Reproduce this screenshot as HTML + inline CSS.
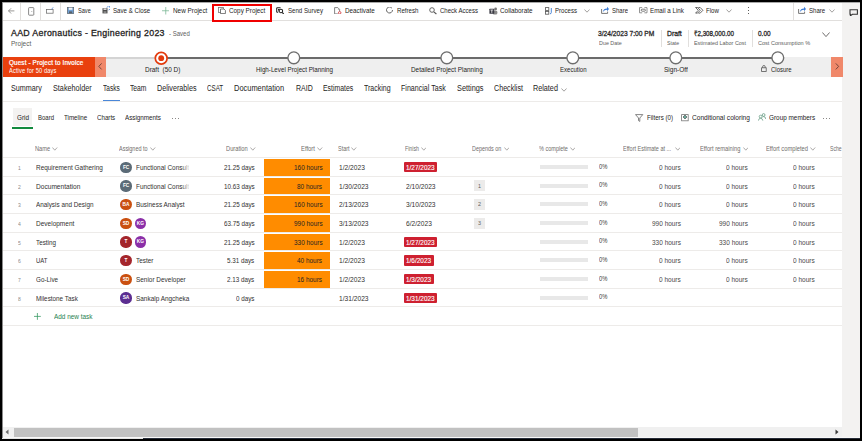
<!DOCTYPE html><html><head><meta charset="utf-8"><style>
*{margin:0;padding:0}
html,body{width:862px;height:441px;overflow:hidden;background:#fff}
body{position:relative;font-family:"Liberation Sans",sans-serif}
.t{position:absolute;white-space:pre;transform-origin:0 0}
.r{position:absolute}
.av{width:11.2px;height:11.2px;border-radius:50%;color:#fff;font-size:4.8px;font-weight:bold;line-height:11.2px;text-align:center;letter-spacing:-0.1px}
</style></head><body>
<div class="r" style="left:0px;top:0px;width:862px;height:441px;background:#ffffff;"></div>
<div class="r" style="left:842px;top:0px;width:20px;height:441px;background:#f3f2f1;"></div>
<div class="r" style="left:2px;top:20px;width:840px;height:1px;background:#e1dfdd;"></div>
<div class="r" style="left:20px;top:2px;width:1px;height:18px;background:#e1dfdd;"></div>
<div class="r" style="left:40px;top:2px;width:1px;height:18px;background:#e1dfdd;"></div>
<div class="r" style="left:60px;top:2px;width:1px;height:18px;background:#e1dfdd;"></div>
<div class="r" style="left:793px;top:2px;width:1px;height:18px;background:#e1dfdd;"></div>
<div class="t" style="left:77.50px;top:7.11px;font-size:7.49px;line-height:7.49px;color:#252423;transform:scaleX(0.750);">Save</div>
<div class="t" style="left:113.00px;top:7.11px;font-size:7.49px;line-height:7.49px;color:#252423;transform:scaleX(0.820);">Save &amp; Close</div>
<div class="t" style="left:172.60px;top:7.11px;font-size:7.49px;line-height:7.49px;color:#252423;transform:scaleX(0.852);">New Project</div>
<div class="t" style="left:229.00px;top:7.11px;font-size:7.49px;line-height:7.49px;color:#252423;transform:scaleX(0.847);">Copy Project</div>
<div class="t" style="left:287.50px;top:7.11px;font-size:7.49px;line-height:7.49px;color:#252423;transform:scaleX(0.816);">Send Survey</div>
<div class="t" style="left:345.00px;top:7.11px;font-size:7.49px;line-height:7.49px;color:#252423;transform:scaleX(0.842);">Deactivate</div>
<div class="t" style="left:396.50px;top:7.11px;font-size:7.49px;line-height:7.49px;color:#252423;transform:scaleX(0.820);">Refresh</div>
<div class="t" style="left:440.00px;top:7.11px;font-size:7.49px;line-height:7.49px;color:#252423;transform:scaleX(0.808);">Check Access</div>
<div class="t" style="left:500.40px;top:7.11px;font-size:7.49px;line-height:7.49px;color:#252423;transform:scaleX(0.851);">Collaborate</div>
<div class="t" style="left:555.00px;top:7.11px;font-size:7.49px;line-height:7.49px;color:#252423;transform:scaleX(0.813);">Process</div>
<div class="t" style="left:612.00px;top:7.11px;font-size:7.49px;line-height:7.49px;color:#252423;transform:scaleX(0.800);">Share</div>
<div class="t" style="left:650.30px;top:7.11px;font-size:7.49px;line-height:7.49px;color:#252423;transform:scaleX(0.833);">Email a Link</div>
<div class="t" style="left:706.40px;top:7.11px;font-size:7.49px;line-height:7.49px;color:#252423;transform:scaleX(0.816);">Flow</div>
<div class="t" style="left:808.60px;top:7.11px;font-size:7.49px;line-height:7.49px;color:#252423;transform:scaleX(0.810);">Share</div>
<div class="r" style="left:212.2px;top:4.2px;width:59.8px;height:17.6px;background:transparent;box-sizing:border-box;border:2.1px solid #f00000;"></div>
<div class="t" style="left:11.20px;top:29.04px;font-size:8.7px;line-height:8.7px;color:#252423;-webkit-text-stroke:0.3px #252423;letter-spacing:0.3px;transform:scaleX(1.014);">AAD Aeronautics - Engineering 2023</div>
<div class="t" style="left:169.00px;top:30.94px;font-size:6.45px;line-height:6.45px;color:#605e5c;transform:scaleX(0.936);">- Saved</div>
<div class="t" style="left:11.20px;top:40.12px;font-size:7.07px;line-height:7.07px;color:#605e5c;transform:scaleX(0.923);">Project</div>
<div class="t" style="left:598.00px;top:30.24px;font-size:7.28px;line-height:7.28px;color:#252423;-webkit-text-stroke:0.28px #252423;transform:scaleX(0.917);">3/24/2023 7:00 PM</div>
<div class="t" style="left:598.50px;top:39.70px;font-size:6.03px;line-height:6.03px;color:#605e5c;transform:scaleX(0.895);">Due Date</div>
<div class="r" style="left:660.5px;top:30px;width:1px;height:17px;background:#e1dfdd;"></div>
<div class="t" style="left:666.60px;top:30.24px;font-size:7.28px;line-height:7.28px;color:#252423;-webkit-text-stroke:0.28px #252423;transform:scaleX(0.938);">Draft</div>
<div class="t" style="left:666.80px;top:39.70px;font-size:6.03px;line-height:6.03px;color:#605e5c;transform:scaleX(0.866);">State</div>
<div class="r" style="left:688px;top:30px;width:1px;height:17px;background:#e1dfdd;"></div>
<div class="t" style="left:693.80px;top:30.24px;font-size:7.28px;line-height:7.28px;color:#252423;-webkit-text-stroke:0.28px #252423;transform:scaleX(0.859);">₹2,308,000.00</div>
<div class="t" style="left:694.00px;top:39.70px;font-size:6.03px;line-height:6.03px;color:#605e5c;transform:scaleX(0.900);">Estimated Labor Cost</div>
<div class="r" style="left:751.5px;top:30px;width:1px;height:17px;background:#e1dfdd;"></div>
<div class="t" style="left:757.60px;top:30.24px;font-size:7.28px;line-height:7.28px;color:#252423;-webkit-text-stroke:0.28px #252423;transform:scaleX(0.889);">0.00</div>
<div class="t" style="left:757.80px;top:39.70px;font-size:6.03px;line-height:6.03px;color:#605e5c;transform:scaleX(0.922);">Cost Consumption %</div>
<div class="r" style="left:2px;top:57px;width:93px;height:19.5px;background:#e9400e;"></div>
<div class="r" style="left:95px;top:57px;width:11px;height:19.5px;background:#f0886a;"></div>
<div class="r" style="left:106px;top:57px;width:725px;height:19.5px;background:#efefef;"></div>
<div class="r" style="left:830.5px;top:57px;width:12px;height:19.5px;background:#f0886a;"></div>
<div class="t" style="left:9.20px;top:60.28px;font-size:6.4px;line-height:6.4px;color:#ffffff;-webkit-text-stroke:0.22px #ffffff;letter-spacing:0.15px;transform:scaleX(0.985);">Quest - Project to Invoice</div>
<div class="t" style="left:9.20px;top:67.77px;font-size:6.3px;line-height:6.3px;color:#ffffff;letter-spacing:0.12px;transform:scaleX(0.911);">Active for 50 days</div>
<div class="r" style="left:106px;top:57px;width:55px;height:1.5px;background:#d4d4d4;"></div>
<div class="r" style="left:161px;top:57.2px;width:617px;height:1.6px;background:#6b6b6b;"></div>
<div class="t" style="left:145.30px;top:66.02px;font-size:7.07px;line-height:7.07px;color:#252423;transform:scaleX(0.910);">Draft  (50 D)</div>
<div class="t" style="left:255.80px;top:66.02px;font-size:7.07px;line-height:7.07px;color:#252423;transform:scaleX(0.883);">High-Level Project Planning</div>
<div class="t" style="left:410.90px;top:66.02px;font-size:7.07px;line-height:7.07px;color:#252423;transform:scaleX(0.904);">Detailed Project Planning</div>
<div class="t" style="left:560.40px;top:66.02px;font-size:7.07px;line-height:7.07px;color:#252423;transform:scaleX(0.857);">Execution</div>
<div class="t" style="left:663.80px;top:66.02px;font-size:7.07px;line-height:7.07px;color:#252423;transform:scaleX(0.922);">Sign-Off</div>
<div class="t" style="left:771.40px;top:66.02px;font-size:7.07px;line-height:7.07px;color:#252423;transform:scaleX(0.846);">Closure</div>
<div class="r" style="left:2px;top:101px;width:840px;height:1px;background:#edebe9;"></div>
<div class="t" style="left:11.40px;top:85.30px;font-size:8.27px;line-height:8.27px;color:#252423;transform:scaleX(0.870);">Summary</div>
<div class="t" style="left:53.20px;top:85.30px;font-size:8.27px;line-height:8.27px;color:#252423;transform:scaleX(0.877);">Stakeholder</div>
<div class="t" style="left:103.00px;top:85.30px;font-size:8.27px;line-height:8.27px;color:#252423;transform:scaleX(0.795);">Tasks</div>
<div class="t" style="left:130.10px;top:85.30px;font-size:8.27px;line-height:8.27px;color:#252423;transform:scaleX(0.816);">Team</div>
<div class="t" style="left:156.90px;top:85.30px;font-size:8.27px;line-height:8.27px;color:#252423;transform:scaleX(0.868);">Deliverables</div>
<div class="t" style="left:207.30px;top:85.30px;font-size:8.27px;line-height:8.27px;color:#252423;transform:scaleX(0.755);">CSAT</div>
<div class="t" style="left:234.20px;top:85.30px;font-size:8.27px;line-height:8.27px;color:#252423;transform:scaleX(0.902);">Documentation</div>
<div class="t" style="left:296.00px;top:85.30px;font-size:8.27px;line-height:8.27px;color:#252423;transform:scaleX(0.850);">RAID</div>
<div class="t" style="left:322.80px;top:85.30px;font-size:8.27px;line-height:8.27px;color:#252423;transform:scaleX(0.835);">Estimates</div>
<div class="t" style="left:363.80px;top:85.30px;font-size:8.27px;line-height:8.27px;color:#252423;transform:scaleX(0.847);">Tracking</div>
<div class="t" style="left:401.30px;top:85.30px;font-size:8.27px;line-height:8.27px;color:#252423;transform:scaleX(0.857);">Financial Task</div>
<div class="t" style="left:456.80px;top:85.30px;font-size:8.27px;line-height:8.27px;color:#252423;transform:scaleX(0.887);">Settings</div>
<div class="t" style="left:493.70px;top:85.30px;font-size:8.27px;line-height:8.27px;color:#252423;transform:scaleX(0.864);">Checklist</div>
<div class="t" style="left:533.30px;top:85.30px;font-size:8.27px;line-height:8.27px;color:#252423;transform:scaleX(0.874);">Related</div>
<div class="r" style="left:102.7px;top:99.6px;width:17.3px;height:1.8px;background:#4a87d8;"></div>
<div class="r" style="left:12.6px;top:108px;width:19.8px;height:17.6px;background:#f3f2f1;"></div>
<div class="r" style="left:12.4px;top:126.9px;width:20.2px;height:1.8px;background:#128a3e;"></div>
<div class="t" style="left:16.80px;top:114.42px;font-size:7.07px;line-height:7.07px;color:#252423;transform:scaleX(0.898);">Grid</div>
<div class="t" style="left:38.00px;top:114.42px;font-size:7.07px;line-height:7.07px;color:#252423;transform:scaleX(0.848);">Board</div>
<div class="t" style="left:64.10px;top:114.42px;font-size:7.07px;line-height:7.07px;color:#252423;transform:scaleX(0.877);">Timeline</div>
<div class="t" style="left:96.90px;top:114.42px;font-size:7.07px;line-height:7.07px;color:#252423;transform:scaleX(0.874);">Charts</div>
<div class="t" style="left:125.00px;top:114.42px;font-size:7.07px;line-height:7.07px;color:#252423;transform:scaleX(0.889);">Assignments</div>
<div class="t" style="left:647.00px;top:114.32px;font-size:7.07px;line-height:7.07px;color:#252423;transform:scaleX(0.871);">Filters (0)</div>
<div class="t" style="left:692.00px;top:114.32px;font-size:7.07px;line-height:7.07px;color:#252423;transform:scaleX(0.934);">Conditional coloring</div>
<div class="t" style="left:769.20px;top:114.32px;font-size:7.07px;line-height:7.07px;color:#252423;transform:scaleX(0.904);">Group members</div>
<div class="t" style="left:34.80px;top:146.34px;font-size:6.45px;line-height:6.45px;color:#6f6d6b;transform:scaleX(0.878);">Name</div>
<div class="t" style="left:119.20px;top:146.34px;font-size:6.45px;line-height:6.45px;color:#6f6d6b;transform:scaleX(0.849);">Assigned to</div>
<div class="t" style="left:225.80px;top:146.34px;font-size:6.45px;line-height:6.45px;color:#6f6d6b;transform:scaleX(0.894);">Duration</div>
<div class="t" style="left:301.30px;top:146.34px;font-size:6.45px;line-height:6.45px;color:#6f6d6b;transform:scaleX(0.915);">Effort</div>
<div class="t" style="left:337.50px;top:146.34px;font-size:6.45px;line-height:6.45px;color:#6f6d6b;transform:scaleX(0.852);">Start</div>
<div class="t" style="left:404.70px;top:146.34px;font-size:6.45px;line-height:6.45px;color:#6f6d6b;transform:scaleX(0.814);">Finish</div>
<div class="t" style="left:471.80px;top:146.34px;font-size:6.45px;line-height:6.45px;color:#6f6d6b;transform:scaleX(0.842);">Depends on</div>
<div class="t" style="left:539.40px;top:146.34px;font-size:6.45px;line-height:6.45px;color:#6f6d6b;transform:scaleX(0.858);">% complete</div>
<div class="t" style="left:623.00px;top:146.34px;font-size:6.45px;line-height:6.45px;color:#6f6d6b;transform:scaleX(0.853);">Effort Estimate at ...</div>
<div class="t" style="left:700.40px;top:146.34px;font-size:6.45px;line-height:6.45px;color:#6f6d6b;transform:scaleX(0.890);">Effort remaining</div>
<div class="t" style="left:765.80px;top:146.34px;font-size:6.45px;line-height:6.45px;color:#6f6d6b;transform:scaleX(0.897);">Effort completed</div>
<div class="t" style="left:830.30px;top:146.34px;font-size:6.45px;line-height:6.45px;color:#6f6d6b;transform:scaleX(0.789);">Sche</div>
<div class="r" style="left:2px;top:157px;width:840px;height:1px;background:#edebe9;"></div>
<div class="r" style="left:2px;top:176px;width:840px;height:1px;background:#edebe9;"></div>
<div class="r" style="left:2px;top:194px;width:840px;height:1px;background:#edebe9;"></div>
<div class="r" style="left:2px;top:213px;width:840px;height:1px;background:#edebe9;"></div>
<div class="r" style="left:2px;top:232px;width:840px;height:1px;background:#edebe9;"></div>
<div class="r" style="left:2px;top:250px;width:840px;height:1px;background:#edebe9;"></div>
<div class="r" style="left:2px;top:269px;width:840px;height:1px;background:#edebe9;"></div>
<div class="r" style="left:2px;top:288px;width:840px;height:1px;background:#edebe9;"></div>
<div class="r" style="left:2px;top:306px;width:840px;height:1px;background:#edebe9;"></div>
<div class="r" style="left:2px;top:324.5px;width:840px;height:1px;background:#edebe9;"></div>
<div class="t" style="left:18.41px;top:164.70px;font-size:6.14px;line-height:6.14px;color:#8a8886;transform:scaleX(0.817);">1</div>
<div class="t" style="left:36.20px;top:163.94px;font-size:7.28px;line-height:7.28px;color:#323130;transform:scaleX(0.885);">Requirement Gathering</div>
<div class="r av" style="left:120.40px;top:161.60px;background:#5b6b77;">FC</div>
<div class="t" style="left:136.00px;top:163.94px;font-size:7.28px;line-height:7.28px;color:#323130;transform:scaleX(0.885);">Functional Consultant</div>
<div class="r" style="left:181.5px;top:161.2px;width:7px;height:12px;background:linear-gradient(to right, rgba(255,255,255,0), rgba(255,255,255,0.85));"></div>
<div class="r" style="left:188.5px;top:161.2px;width:30px;height:12px;background:#ffffff;"></div>
<div class="t" style="left:223.98px;top:163.94px;font-size:7.28px;line-height:7.28px;color:#323130;transform:scaleX(0.865);">21.25 days</div>
<div class="r" style="left:263.7px;top:158.7px;width:65.9px;height:17.2px;background:#ff8c00;"></div>
<div class="t" style="left:293.56px;top:163.94px;font-size:7.28px;line-height:7.28px;color:#252423;transform:scaleX(0.885);">160 hours</div>
<div class="t" style="left:339.00px;top:163.94px;font-size:7.28px;line-height:7.28px;color:#323130;transform:scaleX(0.913);">1/2/2023</div>
<div class="r" style="left:403.7px;top:161.7px;width:33.550453125000004px;height:10.6px;background:#ce2030;border-radius:1px;"></div>
<div class="t" style="left:406.00px;top:163.84px;font-size:7.28px;line-height:7.28px;color:#ffffff;-webkit-text-stroke:0.12px #ffffff;transform:scaleX(0.885);">1/27/2023</div>
<div class="r" style="left:539.9px;top:164.89999999999998px;width:48.0px;height:4.2px;background:#e8e8e8;"></div>
<div class="t" style="left:599.00px;top:163.52px;font-size:7.18px;line-height:7.18px;color:#3b3a39;transform:scaleX(0.809);">0%</div>
<div class="t" style="left:658.92px;top:165.18px;font-size:6.76px;line-height:6.76px;color:#4a4948;transform:scaleX(0.962);">0 hours</div>
<div class="t" style="left:725.92px;top:165.18px;font-size:6.76px;line-height:6.76px;color:#4a4948;transform:scaleX(0.962);">0 hours</div>
<div class="t" style="left:792.92px;top:165.18px;font-size:6.76px;line-height:6.76px;color:#4a4948;transform:scaleX(0.962);">0 hours</div>
<div class="t" style="left:18.41px;top:183.50px;font-size:6.14px;line-height:6.14px;color:#8a8886;transform:scaleX(0.817);">2</div>
<div class="t" style="left:36.20px;top:182.74px;font-size:7.28px;line-height:7.28px;color:#323130;transform:scaleX(0.907);">Documentation</div>
<div class="r av" style="left:120.40px;top:180.40px;background:#5b6b77;">FC</div>
<div class="t" style="left:136.00px;top:182.74px;font-size:7.28px;line-height:7.28px;color:#323130;transform:scaleX(0.885);">Functional Consultant</div>
<div class="r" style="left:181.5px;top:180.0px;width:7px;height:12px;background:linear-gradient(to right, rgba(255,255,255,0), rgba(255,255,255,0.85));"></div>
<div class="r" style="left:188.5px;top:180.0px;width:30px;height:12px;background:#ffffff;"></div>
<div class="t" style="left:223.98px;top:182.74px;font-size:7.28px;line-height:7.28px;color:#323130;transform:scaleX(0.865);">10.63 days</div>
<div class="r" style="left:263.7px;top:177.7px;width:65.9px;height:16.2px;background:#ff8c00;"></div>
<div class="t" style="left:297.14px;top:182.74px;font-size:7.28px;line-height:7.28px;color:#252423;transform:scaleX(0.885);">80 hours</div>
<div class="t" style="left:339.00px;top:182.74px;font-size:7.28px;line-height:7.28px;color:#323130;transform:scaleX(0.913);">1/30/2023</div>
<div class="t" style="left:406.00px;top:182.74px;font-size:7.28px;line-height:7.28px;color:#323130;transform:scaleX(0.913);">2/10/2023</div>
<div class="r" style="left:473.9px;top:180.4px;width:11.0px;height:11.0px;background:#ecebea;"></div>
<div class="t" style="left:477.90px;top:183.94px;font-size:5.62px;line-height:5.62px;color:#605e5c;transform:scaleX(0.961);">1</div>
<div class="r" style="left:539.9px;top:183.7px;width:48.0px;height:4.2px;background:#e8e8e8;"></div>
<div class="t" style="left:599.00px;top:182.32px;font-size:7.18px;line-height:7.18px;color:#3b3a39;transform:scaleX(0.809);">0%</div>
<div class="t" style="left:658.92px;top:183.98px;font-size:6.76px;line-height:6.76px;color:#4a4948;transform:scaleX(0.962);">0 hours</div>
<div class="t" style="left:725.92px;top:183.98px;font-size:6.76px;line-height:6.76px;color:#4a4948;transform:scaleX(0.962);">0 hours</div>
<div class="t" style="left:792.92px;top:183.98px;font-size:6.76px;line-height:6.76px;color:#4a4948;transform:scaleX(0.962);">0 hours</div>
<div class="t" style="left:18.41px;top:202.00px;font-size:6.14px;line-height:6.14px;color:#8a8886;transform:scaleX(0.817);">3</div>
<div class="t" style="left:36.20px;top:201.24px;font-size:7.28px;line-height:7.28px;color:#323130;transform:scaleX(0.873);">Analysis and Design</div>
<div class="r av" style="left:120.40px;top:198.90px;background:#ca5010;">BA</div>
<div class="t" style="left:136.00px;top:201.24px;font-size:7.28px;line-height:7.28px;color:#323130;transform:scaleX(0.885);">Business Analyst</div>
<div class="t" style="left:223.98px;top:201.24px;font-size:7.28px;line-height:7.28px;color:#323130;transform:scaleX(0.865);">21.25 days</div>
<div class="r" style="left:263.7px;top:195.7px;width:65.9px;height:17.2px;background:#ff8c00;"></div>
<div class="t" style="left:293.56px;top:201.24px;font-size:7.28px;line-height:7.28px;color:#252423;transform:scaleX(0.885);">160 hours</div>
<div class="t" style="left:339.00px;top:201.24px;font-size:7.28px;line-height:7.28px;color:#323130;transform:scaleX(0.913);">2/13/2023</div>
<div class="t" style="left:406.00px;top:201.24px;font-size:7.28px;line-height:7.28px;color:#323130;transform:scaleX(0.913);">3/10/2023</div>
<div class="r" style="left:473.9px;top:198.9px;width:11.0px;height:11.0px;background:#ecebea;"></div>
<div class="t" style="left:477.90px;top:202.44px;font-size:5.62px;line-height:5.62px;color:#605e5c;transform:scaleX(0.961);">2</div>
<div class="r" style="left:539.9px;top:202.2px;width:48.0px;height:4.2px;background:#e8e8e8;"></div>
<div class="t" style="left:599.00px;top:200.82px;font-size:7.18px;line-height:7.18px;color:#3b3a39;transform:scaleX(0.809);">0%</div>
<div class="t" style="left:658.92px;top:202.48px;font-size:6.76px;line-height:6.76px;color:#4a4948;transform:scaleX(0.962);">0 hours</div>
<div class="t" style="left:725.92px;top:202.48px;font-size:6.76px;line-height:6.76px;color:#4a4948;transform:scaleX(0.962);">0 hours</div>
<div class="t" style="left:792.92px;top:202.48px;font-size:6.76px;line-height:6.76px;color:#4a4948;transform:scaleX(0.962);">0 hours</div>
<div class="t" style="left:18.41px;top:220.70px;font-size:6.14px;line-height:6.14px;color:#8a8886;transform:scaleX(0.817);">4</div>
<div class="t" style="left:36.20px;top:219.94px;font-size:7.28px;line-height:7.28px;color:#323130;transform:scaleX(0.895);">Development</div>
<div class="r av" style="left:120.40px;top:217.60px;background:#ca5010;">SD</div>
<div class="r av" style="left:134.70px;top:217.60px;background:#8b2fa8;">KG</div>
<div class="t" style="left:223.98px;top:219.94px;font-size:7.28px;line-height:7.28px;color:#323130;transform:scaleX(0.865);">63.75 days</div>
<div class="r" style="left:263.7px;top:214.7px;width:65.9px;height:17.2px;background:#ff8c00;"></div>
<div class="t" style="left:293.56px;top:219.94px;font-size:7.28px;line-height:7.28px;color:#252423;transform:scaleX(0.885);">990 hours</div>
<div class="t" style="left:339.00px;top:219.94px;font-size:7.28px;line-height:7.28px;color:#323130;transform:scaleX(0.913);">3/13/2023</div>
<div class="t" style="left:406.00px;top:219.94px;font-size:7.28px;line-height:7.28px;color:#323130;transform:scaleX(0.913);">6/2/2023</div>
<div class="r" style="left:473.9px;top:217.6px;width:11.0px;height:11.0px;background:#ecebea;"></div>
<div class="t" style="left:477.90px;top:221.14px;font-size:5.62px;line-height:5.62px;color:#605e5c;transform:scaleX(0.961);">3</div>
<div class="r" style="left:539.9px;top:220.89999999999998px;width:48.0px;height:4.2px;background:#e8e8e8;"></div>
<div class="t" style="left:599.00px;top:219.52px;font-size:7.18px;line-height:7.18px;color:#3b3a39;transform:scaleX(0.809);">0%</div>
<div class="t" style="left:651.69px;top:221.18px;font-size:6.76px;line-height:6.76px;color:#4a4948;transform:scaleX(0.962);">990 hours</div>
<div class="t" style="left:718.69px;top:221.18px;font-size:6.76px;line-height:6.76px;color:#4a4948;transform:scaleX(0.962);">990 hours</div>
<div class="t" style="left:792.92px;top:221.18px;font-size:6.76px;line-height:6.76px;color:#4a4948;transform:scaleX(0.962);">0 hours</div>
<div class="t" style="left:18.41px;top:239.50px;font-size:6.14px;line-height:6.14px;color:#8a8886;transform:scaleX(0.817);">5</div>
<div class="t" style="left:36.20px;top:238.74px;font-size:7.28px;line-height:7.28px;color:#323130;transform:scaleX(0.867);">Testing</div>
<div class="r av" style="left:120.40px;top:236.40px;background:#a4262c;">T</div>
<div class="r av" style="left:134.70px;top:236.40px;background:#8b2fa8;">KG</div>
<div class="t" style="left:223.98px;top:238.74px;font-size:7.28px;line-height:7.28px;color:#323130;transform:scaleX(0.865);">21.25 days</div>
<div class="r" style="left:263.7px;top:233.7px;width:65.9px;height:16.2px;background:#ff8c00;"></div>
<div class="t" style="left:293.56px;top:238.74px;font-size:7.28px;line-height:7.28px;color:#252423;transform:scaleX(0.885);">330 hours</div>
<div class="t" style="left:339.00px;top:238.74px;font-size:7.28px;line-height:7.28px;color:#323130;transform:scaleX(0.913);">1/2/2023</div>
<div class="r" style="left:403.7px;top:236.5px;width:33.550453125000004px;height:10.6px;background:#ce2030;border-radius:1px;"></div>
<div class="t" style="left:406.00px;top:238.64px;font-size:7.28px;line-height:7.28px;color:#ffffff;-webkit-text-stroke:0.12px #ffffff;transform:scaleX(0.885);">1/27/2023</div>
<div class="r" style="left:539.9px;top:239.7px;width:48.0px;height:4.2px;background:#e8e8e8;"></div>
<div class="t" style="left:599.00px;top:238.32px;font-size:7.18px;line-height:7.18px;color:#3b3a39;transform:scaleX(0.809);">0%</div>
<div class="t" style="left:651.69px;top:239.98px;font-size:6.76px;line-height:6.76px;color:#4a4948;transform:scaleX(0.962);">330 hours</div>
<div class="t" style="left:718.69px;top:239.98px;font-size:6.76px;line-height:6.76px;color:#4a4948;transform:scaleX(0.962);">330 hours</div>
<div class="t" style="left:792.92px;top:239.98px;font-size:6.76px;line-height:6.76px;color:#4a4948;transform:scaleX(0.962);">0 hours</div>
<div class="t" style="left:18.41px;top:258.00px;font-size:6.14px;line-height:6.14px;color:#8a8886;transform:scaleX(0.817);">6</div>
<div class="t" style="left:36.20px;top:257.24px;font-size:7.28px;line-height:7.28px;color:#323130;transform:scaleX(0.813);">UAT</div>
<div class="r av" style="left:120.40px;top:254.90px;background:#a4262c;">T</div>
<div class="t" style="left:136.00px;top:257.24px;font-size:7.28px;line-height:7.28px;color:#323130;transform:scaleX(0.885);">Tester</div>
<div class="t" style="left:227.48px;top:257.24px;font-size:7.28px;line-height:7.28px;color:#323130;transform:scaleX(0.865);">5.31 days</div>
<div class="r" style="left:263.7px;top:251.7px;width:65.9px;height:17.2px;background:#ff8c00;"></div>
<div class="t" style="left:297.14px;top:257.24px;font-size:7.28px;line-height:7.28px;color:#252423;transform:scaleX(0.885);">40 hours</div>
<div class="t" style="left:339.00px;top:257.24px;font-size:7.28px;line-height:7.28px;color:#323130;transform:scaleX(0.913);">1/2/2023</div>
<div class="r" style="left:403.7px;top:255.0px;width:29.968706250000004px;height:10.6px;background:#ce2030;border-radius:1px;"></div>
<div class="t" style="left:406.00px;top:257.14px;font-size:7.28px;line-height:7.28px;color:#ffffff;-webkit-text-stroke:0.12px #ffffff;transform:scaleX(0.885);">1/6/2023</div>
<div class="r" style="left:539.9px;top:258.2px;width:48.0px;height:4.2px;background:#e8e8e8;"></div>
<div class="t" style="left:599.00px;top:256.82px;font-size:7.18px;line-height:7.18px;color:#3b3a39;transform:scaleX(0.809);">0%</div>
<div class="t" style="left:658.92px;top:258.48px;font-size:6.76px;line-height:6.76px;color:#4a4948;transform:scaleX(0.962);">0 hours</div>
<div class="t" style="left:725.92px;top:258.48px;font-size:6.76px;line-height:6.76px;color:#4a4948;transform:scaleX(0.962);">0 hours</div>
<div class="t" style="left:792.92px;top:258.48px;font-size:6.76px;line-height:6.76px;color:#4a4948;transform:scaleX(0.962);">0 hours</div>
<div class="t" style="left:18.41px;top:276.70px;font-size:6.14px;line-height:6.14px;color:#8a8886;transform:scaleX(0.817);">7</div>
<div class="t" style="left:36.20px;top:275.94px;font-size:7.28px;line-height:7.28px;color:#323130;transform:scaleX(0.867);">Go-Live</div>
<div class="r av" style="left:120.40px;top:273.60px;background:#ca5010;">SD</div>
<div class="t" style="left:136.00px;top:275.94px;font-size:7.28px;line-height:7.28px;color:#323130;transform:scaleX(0.885);">Senior Developer</div>
<div class="t" style="left:227.48px;top:275.94px;font-size:7.28px;line-height:7.28px;color:#323130;transform:scaleX(0.865);">2.13 days</div>
<div class="r" style="left:263.7px;top:270.7px;width:65.9px;height:17.2px;background:#ff8c00;"></div>
<div class="t" style="left:297.14px;top:275.94px;font-size:7.28px;line-height:7.28px;color:#252423;transform:scaleX(0.885);">16 hours</div>
<div class="t" style="left:339.00px;top:275.94px;font-size:7.28px;line-height:7.28px;color:#323130;transform:scaleX(0.913);">1/2/2023</div>
<div class="r" style="left:403.7px;top:273.7px;width:29.968706250000004px;height:10.6px;background:#ce2030;border-radius:1px;"></div>
<div class="t" style="left:406.00px;top:275.84px;font-size:7.28px;line-height:7.28px;color:#ffffff;-webkit-text-stroke:0.12px #ffffff;transform:scaleX(0.885);">1/3/2023</div>
<div class="r" style="left:539.9px;top:276.9px;width:48.0px;height:4.2px;background:#e8e8e8;"></div>
<div class="t" style="left:599.00px;top:275.52px;font-size:7.18px;line-height:7.18px;color:#3b3a39;transform:scaleX(0.809);">0%</div>
<div class="t" style="left:658.92px;top:277.18px;font-size:6.76px;line-height:6.76px;color:#4a4948;transform:scaleX(0.962);">0 hours</div>
<div class="t" style="left:725.92px;top:277.18px;font-size:6.76px;line-height:6.76px;color:#4a4948;transform:scaleX(0.962);">0 hours</div>
<div class="t" style="left:792.92px;top:277.18px;font-size:6.76px;line-height:6.76px;color:#4a4948;transform:scaleX(0.962);">0 hours</div>
<div class="t" style="left:18.41px;top:295.50px;font-size:6.14px;line-height:6.14px;color:#8a8886;transform:scaleX(0.817);">8</div>
<div class="t" style="left:36.20px;top:294.74px;font-size:7.28px;line-height:7.28px;color:#323130;transform:scaleX(0.873);">Milestone Task</div>
<div class="r av" style="left:120.40px;top:292.40px;background:#5c2e91;">SA</div>
<div class="t" style="left:136.00px;top:294.74px;font-size:7.28px;line-height:7.28px;color:#323130;transform:scaleX(0.885);">Sankalp Angcheka</div>
<div class="t" style="left:236.24px;top:294.74px;font-size:7.28px;line-height:7.28px;color:#323130;transform:scaleX(0.865);">0 days</div>
<div class="t" style="left:339.00px;top:294.74px;font-size:7.28px;line-height:7.28px;color:#323130;transform:scaleX(0.913);">1/31/2023</div>
<div class="r" style="left:403.7px;top:292.5px;width:33.550453125000004px;height:10.6px;background:#ce2030;border-radius:1px;"></div>
<div class="t" style="left:406.00px;top:294.64px;font-size:7.28px;line-height:7.28px;color:#ffffff;-webkit-text-stroke:0.12px #ffffff;transform:scaleX(0.885);">1/31/2023</div>
<div class="r" style="left:539.9px;top:295.7px;width:48.0px;height:4.2px;background:#e8e8e8;"></div>
<div class="t" style="left:599.00px;top:294.32px;font-size:7.18px;line-height:7.18px;color:#3b3a39;transform:scaleX(0.809);">0%</div>
<div class="t" style="left:53.80px;top:313.44px;font-size:7.28px;line-height:7.28px;color:#1f7f4f;transform:scaleX(0.883);">Add new task</div>
<div class="r" style="left:2px;top:426.5px;width:840px;height:10.5px;background:#f0f0f0;"></div>
<div class="r" style="left:13.5px;top:428px;width:624px;height:8.6px;background:#c1c1c1;"></div>
<svg class="r" style="left:7.8px;top:7.8px;" width="7" height="6" viewBox="0 0 7 6"><path d="M0.5,2.9 H6.4 M3.1,0.3 L0.5,2.9 L3.1,5.5" fill="none" stroke="#7a7876" stroke-width="0.75"/></svg>
<svg class="r" style="left:27.6px;top:6.6px;" width="7" height="9" viewBox="0 0 7 9"><rect x="0.6" y="0.6" width="5.2" height="7.6" rx="0.7" fill="none" stroke="#6b6b6b" stroke-width="0.8"/><rect x="3.4" y="4.1" width="0.8" height="0.8" fill="#888"/></svg>
<svg class="r" style="left:46.2px;top:7.4px;" width="8.5" height="7" viewBox="0 0 8.5 7"><rect x="0.5" y="2.4" width="6.6" height="3.8" fill="none" stroke="#6b6b6b" stroke-width="0.75"/><path d="M5.4,2.2 L7.4,0.4" stroke="#4a7fd0" stroke-width="0.8"/></svg>
<svg class="r" style="left:66.6px;top:7.2px;" width="7.5" height="7" viewBox="0 0 7.5 7"><rect x="0.4" y="0.4" width="6.3" height="6" fill="#6f9fd4" stroke="#5f6b75" stroke-width="0.8"/><rect x="1.8" y="0.7" width="3.6" height="2.1" fill="#f4f4f4"/><rect x="2" y="4.4" width="3.2" height="1.8" fill="#55606a"/></svg>
<svg class="r" style="left:101.6px;top:6.4px;" width="8.5" height="8" viewBox="0 0 8.5 8"><rect x="0.5" y="2.2" width="5" height="5.2" fill="#4d4d4d"/><rect x="1.5" y="2.4" width="3" height="1.6" fill="#ddd"/><rect x="1.6" y="5.2" width="2.8" height="1.8" fill="#8a8a8a"/><path d="M4.6,1.6 L6.2,0.4 M6.6,0.6 H8 V2 M8,3.2 L6.6,4" fill="none" stroke="#3a7bd5" stroke-width="0.75"/></svg>
<svg class="r" style="left:161.5px;top:7px;" width="7.5" height="7.5" viewBox="0 0 7.5 7.5"><path d="M3.75,0 V7.5 M0,3.75 H7.5" stroke="#74b490" stroke-width="0.75"/></svg>
<svg class="r" style="left:218px;top:7px;" width="8" height="7" viewBox="0 0 8 7"><rect x="0.5" y="0.5" width="4.8" height="5" fill="#fff" stroke="#777" stroke-width="0.8"/><path d="M2.5,2 H6 L7.4,3.4 V6.6 H2.5 Z" fill="#fff" stroke="#555" stroke-width="0.8"/></svg>
<svg class="r" style="left:276.4px;top:6.8px;" width="8.5" height="7.5" viewBox="0 0 8.5 7.5"><path d="M0.7,0.7 H4.6 M0.7,0.7 V5.2 M0.7,5.2 H2.2 M2.0,2.4 H3.6 M2.0,3.8 H2.8" fill="none" stroke="#222" stroke-width="1.05"/><circle cx="4.9" cy="4.0" r="1.75" fill="none" stroke="#222" stroke-width="1.05"/><path d="M6.1,5.3 L7.7,7" stroke="#222" stroke-width="1.1"/></svg>
<svg class="r" style="left:334px;top:6.6px;" width="8" height="7.6" viewBox="0 0 8 7.6"><path d="M0.6,0.6 H3.8 L5.6,2.4 V4.2 M0.6,0.6 V6.9 H3.9" fill="none" stroke="#666" stroke-width="0.8"/><path d="M3.9,2.4 H5.6" stroke="#888" stroke-width="0.6"/><circle cx="5.7" cy="5.8" r="1.25" fill="none" stroke="#d13438" stroke-width="0.85"/></svg>
<svg class="r" style="left:385.5px;top:7px;" width="8" height="7" viewBox="0 0 8 7"><path d="M5.9,1.2 A3,3 0 1 0 6.5,3" fill="none" stroke="#555" stroke-width="0.9"/></svg>
<svg class="r" style="left:429px;top:7px;" width="8.5" height="7.5" viewBox="0 0 8.5 7.5"><circle cx="3" cy="3" r="2.3" fill="none" stroke="#555" stroke-width="0.9"/><path d="M4.8,4.8 L7.4,7" stroke="#555" stroke-width="1.1"/></svg>
<svg class="r" style="left:489px;top:6.5px;" width="9" height="8.5" viewBox="0 0 9 8.5"><circle cx="6.6" cy="1.9" r="1.4" fill="#777"/><rect x="3.6" y="3.4" width="4.8" height="4.2" rx="1.6" fill="#8a8a8a"/><rect x="0.4" y="1.8" width="4.8" height="5" rx="0.5" fill="#3b3b45"/><path d="M1.4,3 H4.2 M2.8,3 V5.9" stroke="#fff" stroke-width="0.75"/></svg>
<svg class="r" style="left:544.5px;top:6.5px;" width="8" height="8" viewBox="0 0 8 8"><rect x="0.5" y="0.6" width="3.3" height="2.8" fill="none" stroke="#555" stroke-width="0.8"/><rect x="0.5" y="4.4" width="3.3" height="2.8" fill="none" stroke="#555" stroke-width="0.8"/><path d="M6.3,1 V5.5 Q6.3,6.8 5,6.8" fill="none" stroke="#3a7bd5" stroke-width="0.9"/></svg>
<svg class="r" style="left:583.8px;top:8.8px;" width="6" height="4.2" viewBox="0 0 6 4.2"><polyline points="0.4,0.5 3.0,3.2 5.6,0.5" fill="none" stroke="#8a8886" stroke-width="0.8"/></svg>
<svg class="r" style="left:600.5px;top:6px;" width="8.5" height="8" viewBox="0 0 8.5 8"><path d="M0.6,3 V7.4 H6.6 V5.6" fill="none" stroke="#555" stroke-width="0.8"/><path d="M1.8,6 Q2.5,2.6 6,2.6 V0.8 L8,3 L6,5.2 V3.8 Q3.6,3.8 1.8,6 Z" fill="#3a7bd5"/></svg>
<svg class="r" style="left:638.6px;top:7.4px;" width="9" height="7" viewBox="0 0 9 7"><path d="M0.5,0.6 H3.2 M0.5,0.6 V5.8 H3.2 M5.4,0.6 H8 V5.8 H5.4" fill="none" stroke="#777" stroke-width="0.8"/><rect x="2.2" y="2.2" width="4.2" height="2" rx="1" fill="none" stroke="#555" stroke-width="0.8"/></svg>
<svg class="r" style="left:694.8px;top:7.2px;" width="9" height="6.6" viewBox="0 0 9 6.6"><path d="M0.6,0.5 H2.6 L5.3,3.3 L2.6,6.1 H0.6 L3.3,3.3 Z M3.4,0.5 H5.2 L7.9,3.3 L5.2,6.1 H3.4" fill="none" stroke="#444" stroke-width="0.8" stroke-linejoin="round"/></svg>
<svg class="r" style="left:725.5px;top:8.8px;" width="6" height="4.2" viewBox="0 0 6 4.2"><polyline points="0.4,0.5 3.0,3.2 5.6,0.5" fill="none" stroke="#8a8886" stroke-width="0.8"/></svg>
<div class="r" style="left:747.6px;top:6.6px;width:1.2px;height:1.2px;background:#605e5c;"></div>
<div class="r" style="left:747.6px;top:9.6px;width:1.2px;height:1.2px;background:#605e5c;"></div>
<div class="r" style="left:747.6px;top:12.6px;width:1.2px;height:1.2px;background:#605e5c;"></div>
<svg class="r" style="left:797.8px;top:6px;" width="8.5" height="8" viewBox="0 0 8.5 8"><path d="M0.6,3 V7.4 H6.6 V5.6" fill="none" stroke="#555" stroke-width="0.8"/><path d="M1.8,6 Q2.5,2.6 6,2.6 V0.8 L8,3 L6,5.2 V3.8 Q3.6,3.8 1.8,6 Z" fill="#3a7bd5"/></svg>
<svg class="r" style="left:829px;top:8.8px;" width="6" height="4.2" viewBox="0 0 6 4.2"><polyline points="0.4,0.5 3.0,3.2 5.6,0.5" fill="none" stroke="#8a8886" stroke-width="0.8"/></svg>
<svg class="r" style="left:848.5px;top:8.5px;" width="9.5" height="7.5" viewBox="0 0 9.5 7.5"><path d="M1,0.8 H8.4 V5.2 H3.4 L1.4,6.8 V5.2 H1 Z" fill="none" stroke="#333" stroke-width="1.1"/></svg>
<svg class="r" style="left:821.5px;top:32px;" width="8" height="5.6" viewBox="0 0 8 5.6"><polyline points="0.4,0.5 4.0,4.6 7.6,0.5" fill="none" stroke="#605e5c" stroke-width="0.9"/></svg>
<svg class="r" style="left:150px;top:47px;" width="22" height="22" viewBox="0 0 22 22"><circle cx="11.2" cy="11.2" r="5.9" fill="#fff" stroke="#e33a0c" stroke-width="1.7"/><circle cx="11.2" cy="11.2" r="2.9" fill="#e33a0c"/></svg>
<svg class="r" style="left:283.09999999999997px;top:47px;" width="22" height="22" viewBox="0 0 22 22"><circle cx="10.8" cy="10.8" r="5.9" fill="#fff" stroke="#6e6e6e" stroke-width="1.4"/></svg>
<svg class="r" style="left:435.8px;top:47px;" width="22" height="22" viewBox="0 0 22 22"><circle cx="10.8" cy="10.8" r="5.9" fill="#fff" stroke="#6e6e6e" stroke-width="1.4"/></svg>
<svg class="r" style="left:562.4000000000001px;top:47px;" width="22" height="22" viewBox="0 0 22 22"><circle cx="10.8" cy="10.8" r="5.9" fill="#fff" stroke="#6e6e6e" stroke-width="1.4"/></svg>
<svg class="r" style="left:664.8000000000001px;top:47px;" width="22" height="22" viewBox="0 0 22 22"><circle cx="10.8" cy="10.8" r="5.9" fill="#fff" stroke="#6e6e6e" stroke-width="1.4"/></svg>
<svg class="r" style="left:767.2px;top:47px;" width="22" height="22" viewBox="0 0 22 22"><circle cx="10.8" cy="10.8" r="5.9" fill="#fff" stroke="#6e6e6e" stroke-width="1.4"/></svg>
<svg class="r" style="left:98px;top:63px;" width="5" height="7" viewBox="0 0 5 7"><polyline points="3.6,0.4 0.8,3.4 3.6,6.4" fill="none" stroke="#6a4036" stroke-width="0.9"/></svg>
<svg class="r" style="left:834.5px;top:63px;" width="5" height="7" viewBox="0 0 5 7"><polyline points="0.8,0.4 3.6,3.4 0.8,6.4" fill="none" stroke="#6a4036" stroke-width="0.9"/></svg>
<svg class="r" style="left:761px;top:64.5px;" width="6" height="7" viewBox="0 0 6 7"><rect x="0.6" y="2.8" width="4.6" height="3.6" fill="none" stroke="#555" stroke-width="0.8"/><path d="M1.6,2.8 V1.8 A1.3,1.3 0 0 1 4.2,1.8 V2.8" fill="none" stroke="#555" stroke-width="0.8"/></svg>
<svg class="r" style="left:561px;top:87.8px;" width="6" height="4.2" viewBox="0 0 6 4.2"><polyline points="0.4,0.5 3.0,3.2 5.6,0.5" fill="none" stroke="#8a8886" stroke-width="0.8"/></svg>
<div class="r" style="left:172.3px;top:118.0px;width:1.0px;height:1.0px;background:#8a8886;"></div>
<div class="r" style="left:175.3px;top:118.0px;width:1.0px;height:1.0px;background:#8a8886;"></div>
<div class="r" style="left:178.3px;top:118.0px;width:1.0px;height:1.0px;background:#8a8886;"></div>
<div class="r" style="left:823.4px;top:118.0px;width:1.0px;height:1.0px;background:#8a8886;"></div>
<div class="r" style="left:826.4px;top:118.0px;width:1.0px;height:1.0px;background:#8a8886;"></div>
<div class="r" style="left:829.4px;top:118.0px;width:1.0px;height:1.0px;background:#8a8886;"></div>
<svg class="r" style="left:635px;top:113.5px;" width="8.5" height="8" viewBox="0 0 8.5 8"><path d="M0.5,0.6 H7.8 L4.8,4 V7.4 L3.5,6.6 V4 Z" fill="none" stroke="#666" stroke-width="0.8"/></svg>
<svg class="r" style="left:680.5px;top:113px;" width="8.5" height="8.5" viewBox="0 0 8.5 8.5"><rect x="0.6" y="1.6" width="6.6" height="6.2" fill="none" stroke="#777" stroke-width="0.8"/><path d="M2,4 L4,2 L6,4 L4,6 Z" fill="#6aa89a" stroke="#444" stroke-width="0.6"/></svg>
<svg class="r" style="left:757.5px;top:112.5px;" width="8.5" height="8" viewBox="0 0 8.5 8"><circle cx="5.6" cy="2" r="1.4" fill="none" stroke="#6a9e86" stroke-width="0.8"/><circle cx="2.6" cy="3.6" r="1.4" fill="none" stroke="#6a9e86" stroke-width="0.8"/><path d="M0.4,7.6 Q0.8,5.2 2.6,5.2 Q4.4,5.2 4.8,7.6 M4.6,4.2 Q5,3.6 5.6,3.6 Q7.6,3.6 7.8,6" fill="none" stroke="#6a9e86" stroke-width="0.8"/></svg>
<svg class="r" style="left:52.0px;top:147.0px;" width="5.6" height="4.2" viewBox="0 0 5.6 4.2"><polyline points="0.4,0.5 2.8,3.2 5.199999999999999,0.5" fill="none" stroke="#8a8886" stroke-width="0.7"/></svg>
<svg class="r" style="left:150.0px;top:147.0px;" width="5.6" height="4.2" viewBox="0 0 5.6 4.2"><polyline points="0.4,0.5 2.8,3.2 5.199999999999999,0.5" fill="none" stroke="#8a8886" stroke-width="0.7"/></svg>
<svg class="r" style="left:250.3px;top:147.0px;" width="5.6" height="4.2" viewBox="0 0 5.6 4.2"><polyline points="0.4,0.5 2.8,3.2 5.199999999999999,0.5" fill="none" stroke="#8a8886" stroke-width="0.7"/></svg>
<svg class="r" style="left:317.3px;top:147.0px;" width="5.6" height="4.2" viewBox="0 0 5.6 4.2"><polyline points="0.4,0.5 2.8,3.2 5.199999999999999,0.5" fill="none" stroke="#8a8886" stroke-width="0.7"/></svg>
<svg class="r" style="left:351.2px;top:147.0px;" width="5.6" height="4.2" viewBox="0 0 5.6 4.2"><polyline points="0.4,0.5 2.8,3.2 5.199999999999999,0.5" fill="none" stroke="#8a8886" stroke-width="0.7"/></svg>
<svg class="r" style="left:420.7px;top:147.0px;" width="5.6" height="4.2" viewBox="0 0 5.6 4.2"><polyline points="0.4,0.5 2.8,3.2 5.199999999999999,0.5" fill="none" stroke="#8a8886" stroke-width="0.7"/></svg>
<svg class="r" style="left:503.6px;top:147.0px;" width="5.6" height="4.2" viewBox="0 0 5.6 4.2"><polyline points="0.4,0.5 2.8,3.2 5.199999999999999,0.5" fill="none" stroke="#8a8886" stroke-width="0.7"/></svg>
<svg class="r" style="left:569.9px;top:147.0px;" width="5.6" height="4.2" viewBox="0 0 5.6 4.2"><polyline points="0.4,0.5 2.8,3.2 5.199999999999999,0.5" fill="none" stroke="#8a8886" stroke-width="0.7"/></svg>
<svg class="r" style="left:674.6px;top:147.0px;" width="5.6" height="4.2" viewBox="0 0 5.6 4.2"><polyline points="0.4,0.5 2.8,3.2 5.199999999999999,0.5" fill="none" stroke="#8a8886" stroke-width="0.7"/></svg>
<svg class="r" style="left:742.8px;top:147.0px;" width="5.6" height="4.2" viewBox="0 0 5.6 4.2"><polyline points="0.4,0.5 2.8,3.2 5.199999999999999,0.5" fill="none" stroke="#8a8886" stroke-width="0.7"/></svg>
<svg class="r" style="left:810.4px;top:147.0px;" width="5.6" height="4.2" viewBox="0 0 5.6 4.2"><polyline points="0.4,0.5 2.8,3.2 5.199999999999999,0.5" fill="none" stroke="#8a8886" stroke-width="0.7"/></svg>
<svg class="r" style="left:33.8px;top:313.2px;" width="7.5" height="7.5" viewBox="0 0 7.5 7.5"><path d="M3.4,0 V6.8 M0,3.4 H6.8" stroke="#3a9a66" stroke-width="0.8"/></svg>
<svg class="r" style="left:5px;top:429px;" width="4" height="6" viewBox="0 0 4 6"><polygon points="3.5,0.5 0.5,3 3.5,5.5" fill="#6b6b6b"/></svg>
<svg class="r" style="left:834.5px;top:429px;" width="4" height="6" viewBox="0 0 4 6"><polygon points="0.5,0.5 3.5,3 0.5,5.5" fill="#3b3b3b"/></svg>
<div class="r" style="left:0px;top:0px;width:862px;height:2px;background:#000;"></div>
<div class="r" style="left:0px;top:0px;width:2px;height:441px;background:#000;"></div>
<div class="r" style="left:860px;top:0px;width:2px;height:441px;background:#000;"></div>
<div class="r" style="left:0px;top:439px;width:862px;height:2px;background:#000;"></div>
<div class="r" style="left:143px;top:438px;width:717px;height:1px;background:#262c38;"></div>
<div class="r" style="left:2px;top:438px;width:141px;height:1px;background:#e4e4e4;"></div>
<div class="r" style="left:2px;top:437px;width:858px;height:1px;background:#f8f8f8;"></div>
<div class="r" style="left:2px;top:2px;width:858px;height:1px;background:#a8a8a8;"></div>
<div class="r" style="left:2px;top:2px;width:1px;height:436px;background:#8c8c8c;"></div>
</body></html>
